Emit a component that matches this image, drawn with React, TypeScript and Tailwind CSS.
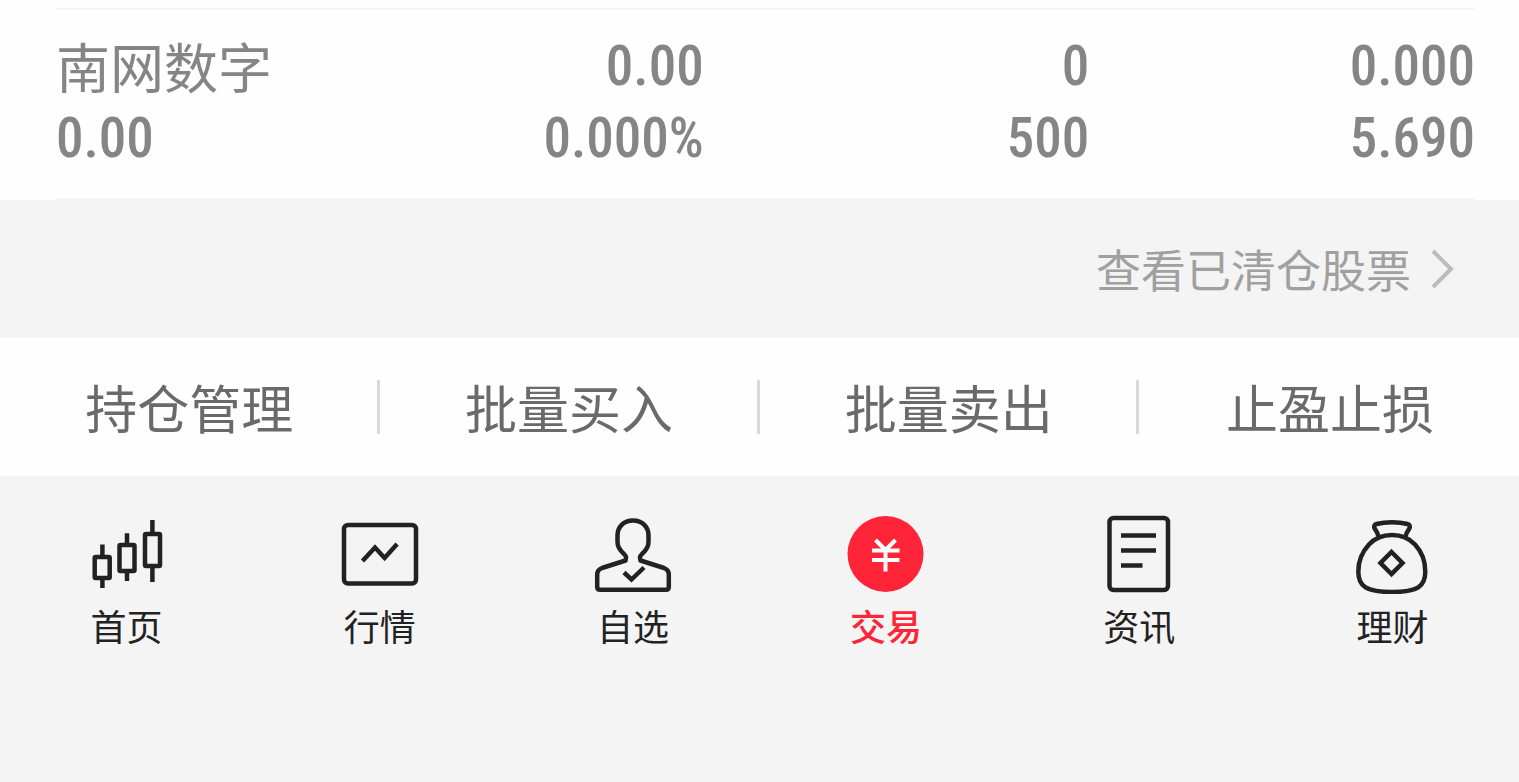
import type { ReactNode } from "react";
import clsx from "clsx";

type Holding = {
  name: string;
  marketValue: string;
  profit: string;
  profitRate: string;
  amount: string;
  available: string;
  cost: string;
  price: string;
};

const holdings: Holding[] = [
  {
    name: "南网数字",
    marketValue: "0.00",
    profit: "0.00",
    profitRate: "0.000%",
    amount: "0",
    available: "500",
    cost: "0.000",
    price: "5.690",
  },
];

const actions = ["持仓管理", "批量买入", "批量卖出", "止盈止损"];

const tabs: { label: string; icon: ReactNode; active?: boolean }[] = [
  { label: "首页", icon: <CandlesIcon /> },
  { label: "行情", icon: <MarketIcon /> },
  { label: "自选", icon: <WatchlistIcon /> },
  { label: "交易", icon: <TradeIcon />, active: true },
  { label: "资讯", icon: <NewsIcon /> },
  { label: "理财", icon: <WealthIcon /> },
];

function Icon({ children }: { children: ReactNode }) {
  return (
    <svg
      viewBox="0 0 80 80"
      className="size-20"
      fill="none"
      stroke="currentColor"
      strokeWidth="4.5"
      strokeLinejoin="round"
      aria-hidden="true"
    >
      {children}
    </svg>
  );
}

function CandlesIcon() {
  return (
    <Icon>
      <rect x="7.7" y="43" width="15" height="21" rx="1" />
      <path d="M15.4 30.5V43M15.4 64v10" />
      <rect x="32.5" y="31" width="15" height="26" rx="1" />
      <path d="M40 19.3V31M40 57v10" />
      <rect x="58" y="20" width="15" height="32" rx="1" />
      <path d="M65.4 6v14M65.4 52v16" />
    </Icon>
  );
}

function MarketIcon() {
  return (
    <Icon>
      <rect x="4" y="11" width="72" height="58.5" rx="4" />
      <path d="M22.5 47 35 33.5l9.600 10.5 12.500-14" strokeLinejoin="miter" />
    </Icon>
  );
}

function WatchlistIcon() {
  return (
    <Icon>
      <path d="M32.500 46.500c1.200-3.500.5-4.500-1.500-6.500-4.500-4-6.500-7-6.500-12v-6.500C24.500 13 30.500 6.500 40 6.500S55.500 13 55.500 21.500V28c0 5-2 8-6.500 12-2 2-2.700 3-1.500 6.500L71 54c3.500 1.300 4.800 2.800 4.800 6.500v12.500c0 2-.8 2.700-2.800 2.700H7c-2 0-2.800-.7-2.800-2.700V60.500c0-3.700 1.300-5.200 4.800-6.500Z" />
      <path d="m31 58.500 7.500 7L51 53.500" strokeLinejoin="miter" />
    </Icon>
  );
}

function TradeIcon() {
  return (
    <Icon>
      <circle cx="39.5" cy="40" r="38" fill="currentColor" stroke="none" />
      <path
        d="m29.500 26 10 10 10-10M39.500 36v21.500M26 36.500h27.500M26 46h27.500"
        stroke="#fff"
        strokeWidth="4"
      />
    </Icon>
  );
}

function NewsIcon() {
  return (
    <Icon>
      <rect x="10.5" y="4" width="58.5" height="72" rx="4" />
      <path d="M22 21.500h35M22 36.500h35M22 51.500h21.500" />
    </Icon>
  );
}

function WealthIcon() {
  return (
    <Icon>
      <path d="M26.500 22.500c-.5-3-1.500-4.500-3.500-7.500-1.500-2.500-1-4.300 1.500-5 9-2.500 22-2.500 31 0 2.500.7 3 2.500 1.500 5-2 3-3 4.500-3.500 7.500" />
      <path d="M40 21c-10 0-17 3-23 9.500C10 38 6.300 47 6.300 57.500 6.300 72.500 14.300 78 40 78s33.300-5.500 33.300-20.500C73.300 47 70 38 63 30.500 57 24 50 21 40 21Z" />
      <path d="m39.500 38 11 11-11 11-11-11Z" strokeLinejoin="miter" />
    </Icon>
  );
}

export default function App() {
  return (
    <div className="flex min-h-screen flex-col bg-[#f4f4f4] font-['Noto_Sans_CJK_SC',sans-serif]">
      <section className="bg-[#fefefe] pt-2 pr-11 pl-14">
        <table className="w-full table-fixed border-y-2 border-[#f4f4f4] text-right font-['Roboto_Condensed',Roboto,'Noto_Sans_CJK_SC',sans-serif] text-[55px] leading-[72px] font-medium text-[#858585]">
          <tbody>
            {holdings.map((h) => (
              <tr key={h.name}>
                <td className="w-[262px] pt-5 pb-6 text-left">
                  <div className="font-['Noto_Sans_CJK_SC',sans-serif] text-[54px] font-normal whitespace-nowrap">{h.name}</div>
                  <div>{h.marketValue}</div>
                </td>
                <td className="pt-5 pb-6">
                  <div>{h.profit}</div>
                  <div>{h.profitRate}</div>
                </td>
                <td className="pt-5 pb-6">
                  <div>{h.amount}</div>
                  <div>{h.available}</div>
                </td>
                <td className="pt-5 pb-6">
                  <div>{h.cost}</div>
                  <div>{h.price}</div>
                </td>
              </tr>
            ))}
          </tbody>
        </table>
      </section>

      <div className="flex h-[138px] items-center justify-end px-16">
        <a href="#cleared" className="flex items-center gap-5 text-[45px] leading-[60px] text-[#a0a0a0]">
          查看已清仓股票
          <svg viewBox="0 0 24 40" className="h-10 w-6" fill="none" stroke="#bcbcbc" strokeWidth="4" aria-hidden="true">
            <path d="m2 2 18 18L2 38" />
          </svg>
        </a>
      </div>

      <div className="grid grid-cols-4 divide-x-3 divide-[#d9d9d9] bg-[#fefefe] py-[42px]">
        {actions.map((label) => (
          <button key={label} type="button" className="pl-0.5 text-[52px] leading-[54px] text-[#6a6a6a]">
            {label}
          </button>
        ))}
      </div>

      <nav className="grid grid-cols-6 pt-[38px]">
        {tabs.map((tab) => (
          <a
            key={tab.label}
            href="#"
            className={clsx(
              "flex flex-col items-center gap-2 text-[36px] leading-[46px]",
              tab.active ? "font-medium text-[#ff2437]" : "text-[#222]",
            )}
          >
            {tab.icon}
            {tab.label}
          </a>
        ))}
      </nav>
    </div>
  );
}
